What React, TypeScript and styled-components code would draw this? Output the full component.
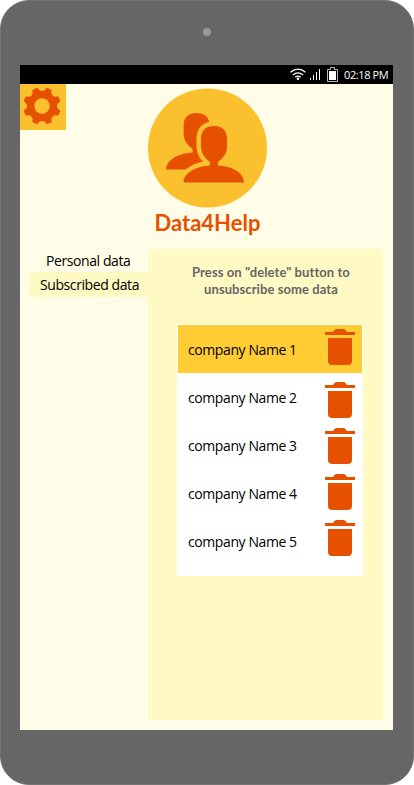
import React from "react";
import styled, { createGlobalStyle } from "styled-components";

const GlobalStyle = createGlobalStyle`
  * { box-sizing: border-box; }
  body { margin: 0; background: #fff; }
`;

const Device = styled.main`
  width: 414px;
  height: 785px;
  padding: 27px 19px 0;
  border: 1px solid #737373;
  border-radius: 29px;
  background: #666;
  font-family: "Open Sans", "Noto Sans", sans-serif;
  color: #000;
  overflow: hidden;
`;

const Camera = styled.div`
  width: 8px;
  height: 8px;
  margin: 0 0 29px 183px;
  border-radius: 50%;
  background: #999;
`;

const Screen = styled.section`
  width: 373px;
  height: 665px;
  background: #fffde7;
`;

const StatusBar = styled.div`
  display: flex;
  align-items: center;
  height: 19px;
  padding-left: 270px;
  background: #000;
  color: #fff;
`;

const Clock = styled.time`
  margin-left: 5px;
  font-size: 11px;
  line-height: 19px;
  letter-spacing: -0.4px;
  white-space: nowrap;
`;

const Header = styled.header`
  display: grid;
  grid-template-columns: 46px 1fr 46px;
  height: 165px;
`;

const SettingsButton = styled.button`
  width: 46px;
  height: 46px;
  padding: 0;
  border: 0;
  background: #fbc02d;
  svg { display: block; }
`;

const Brand = styled.div`
  display: flex;
  flex-direction: column;
  align-items: center;
  padding: 4px 0 0 2px;
  svg { display: block; }
`;

const Title = styled.h1`
  margin: 0;
  font: 700 22px/30px Lato, sans-serif;
  color: #e65100;
`;

const Content = styled.div`
  display: grid;
  grid-template-columns: 119px 235px;
  padding-left: 9px;
  height: 471px;
`;

const Nav = styled.nav`
  display: flex;
  flex-direction: column;
`;

const NavItem = styled.a<{ $active?: boolean }>`
  height: ${(p) => (p.$active ? 25 : 23)}px;
  padding-left: ${(p) => (p.$active ? 11 : 17)}px;
  background: ${(p) => (p.$active ? "#fff9c4" : "transparent")};
  font-size: 14px;
  line-height: ${(p) => (p.$active ? 26 : 24)}px;
  letter-spacing: -0.41px;
  white-space: nowrap;
`;

const Panel = styled.section`
  padding: 15px 20px 0 29px;
  background: #fff9c4;
`;

const Instruction = styled.p`
  width: 188px;
  height: 60px;
  margin: 0;
  font: 700 13px/17px Lato, sans-serif;
  letter-spacing: 0.08px;
  color: #666;
  text-align: center;
  white-space: nowrap;
`;

const ListBox = styled.div`
  display: grid;
  grid-template-columns: 147px 37px;
  width: 186px;
  height: 252px;
  border: 1px solid #fff;
  background: linear-gradient(#ffcc33 48px, #fff 48px);
`;

const Names = styled.ul`
  margin: 0;
  padding: 0;
  list-style: none;
`;

const Name = styled.li`
  height: 48px;
  padding-left: 10px;
  font-size: 14px;
  line-height: 50px;
  letter-spacing: -0.41px;
  white-space: nowrap;
`;

const Actions = styled.div`
  display: flex;
  flex-direction: column;
  gap: 10px;
  padding-top: 4px;
`;

const DeleteButton = styled.button<{ $first?: boolean }>`
  width: 30px;
  height: 36px;
  padding: 0;
  border: 0;
  background: none;
  margin-bottom: ${(p) => (p.$first ? 7 : 0)}px;
  svg { display: block; }
`;

const Gear = () => (
  <svg width="46" height="46" viewBox="0 0 46 46">
    <circle cx="22" cy="22" r="18.8" fill="#e65100" />
    <g fill="#fbc02d">
      {[0, 45, 90, 135, 180, 225, 270, 315].map((a) => (
        <circle key={a} cx="22" cy="2.6" r="4.4" transform={`rotate(${a} 22 22)`} />
      ))}
      <circle cx="22" cy="22" r="7.7" />
    </g>
  </svg>
);

const person =
  "M35.5 94.5C35.5 85 49 78 62 77.6V74C57 70 53 66 53 58V51C53 42 58 38 66 38C74 38 79 42 79 51V58C79 66 75 70 70 74V77.6C84 78 96 85 96 94.5Z";

const People = () => (
  <svg width="119" height="120" viewBox="0 0 119 120">
    <circle cx="59.5" cy="60" r="59.5" fill="#fbc02d" />
    <path fill="#e65100" d={person} transform="translate(-17.4 -13)" />
    <path fill="#e65100" stroke="#fbc02d" strokeWidth="9" paintOrder="stroke" strokeLinejoin="round" d={person} />
  </svg>
);

const Trash = () => (
  <svg width="30" height="36" viewBox="0 0 30 36" fill="#e65100">
    <path d="M0 3H7.8C9 2.4 9.5 0 11 0H19C20.5 0 21 2.4 22.2 3H30V6H0ZM3 9H27V32C27 34.5 25.5 36 23 36H7C4.5 36 3 34.5 3 32Z" />
  </svg>
);

const StatusIcons = () => (
  <svg width="49" height="19" viewBox="0 0 49 19" fill="none" stroke="#fff">
    <path strokeWidth="1.3" d="M.5 7.3Q8 1.1 15.5 7.3M3 9.9Q8 5.7 13 9.9M5.3 12.2Q8 10 10.7 12.2" />
    <circle cx="8" cy="13.7" r="1.3" fill="#fff" stroke="none" />
    <path d="M20.5 15V13M23.5 15V10M26.5 15V7M29.5 15V4" />
    <path stroke="#bbb" d="M37.5 4.5H40.5V2.5H44.5V4.5H47.5V16.5H37.5Z" />
    <path fill="#fff" stroke="none" d="M39 6H46V15H39Z" />
  </svg>
);

const companies = ["company Name 1", "company Name 2", "company Name 3", "company Name 4", "company Name 5"];

export default function App() {
  return (
    <>
      <GlobalStyle />
      <Device>
        <Camera />
        <Screen>
          <StatusBar>
            <StatusIcons />
            <Clock>02:18 PM</Clock>
          </StatusBar>
          <Header>
            <SettingsButton aria-label="Settings"><Gear /></SettingsButton>
            <Brand>
              <People />
              <Title>Data4Help</Title>
            </Brand>
          </Header>
          <Content>
            <Nav>
              <NavItem>Personal data</NavItem>
              <NavItem $active>Subscribed data</NavItem>
            </Nav>
            <Panel>
              <Instruction>Press on "delete" button to<br />unsubscribe some data</Instruction>
              <ListBox>
                <Names>{companies.map((c) => <Name key={c}>{c}</Name>)}</Names>
                <Actions>
                  {companies.map((c, i) => (
                    <DeleteButton key={c} $first={i === 0} aria-label={`Delete ${c}`}><Trash /></DeleteButton>
                  ))}
                </Actions>
              </ListBox>
            </Panel>
          </Content>
        </Screen>
      </Device>
    </>
  );
}
